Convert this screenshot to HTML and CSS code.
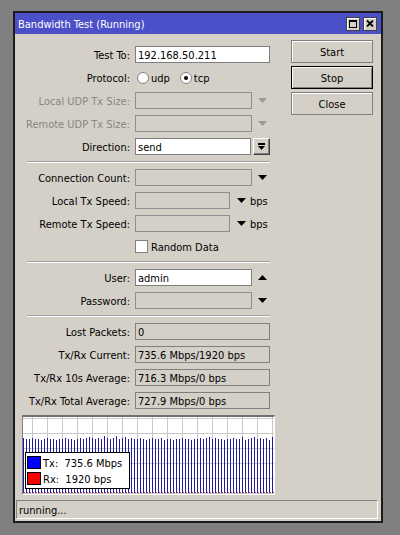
FILE: index.html
```html
<!DOCTYPE html>
<html>
<head>
<meta charset="utf-8">
<title>Bandwidth Test</title>
<link rel="stylesheet" href="styles.css">
</head>
<body>
<div class="window">
  <div class="titlebar">
    <span class="title">Bandwidth Test (Running)</span>
    <div class="tbtns">
      <span class="tbtn"><span class="max-icon"></span></span>
      <span class="tbtn"><svg class="x-icon" width="8" height="7" viewBox="0 0 8 7"><path d="M1 0.5L7 6.5M7 0.5L1 6.5" stroke="#000" stroke-width="1.8"/></svg></span>
    </div>
  </div>
  <div class="body">
    <div class="main">
      <div class="left">
        <div class="form">
          <div class="lbl">Test To:</div>
          <div class="field"><div class="input w-full">192.168.50.211</div></div>

          <div class="lbl">Protocol:</div>
          <div class="field">
            <span class="radio-opt"><svg class="radio" width="12" height="12" viewBox="0 0 12 12"><circle cx="6" cy="6" r="5.5" fill="#fff" stroke="#808080"/></svg><span class="opt-text">udp</span></span>
            <span class="radio-opt"><svg class="radio" width="12" height="12" viewBox="0 0 12 12"><circle cx="6" cy="6" r="5.5" fill="#fff" stroke="#808080"/><circle cx="6" cy="6" r="2" fill="#000"/></svg><span class="opt-text">tcp</span></span>
          </div>

          <div class="lbl dis">Local UDP Tx Size:</div>
          <div class="field"><div class="input disabled w-mid"></div><svg class="arrow" width="9" height="5" viewBox="0 0 9 5"><path d="M0 0H9L4.5 5Z" fill="#9a9a9a"/></svg></div>

          <div class="lbl dis">Remote UDP Tx Size:</div>
          <div class="field"><div class="input disabled w-mid"></div><svg class="arrow" width="9" height="5" viewBox="0 0 9 5"><path d="M0 0H9L4.5 5Z" fill="#9a9a9a"/></svg></div>

          <div class="lbl">Direction:</div>
          <div class="field"><div class="input w-dir">send</div><span class="dd-btn"><svg width="9" height="8" viewBox="0 0 9 8"><rect x="1" y="0" width="7" height="2" fill="#000"/><path d="M1 3H8L4.5 7Z" fill="#000"/></svg></span></div>

          <div class="sep"></div>

          <div class="lbl">Connection Count:</div>
          <div class="field"><div class="input disabled w-mid"></div><svg class="arrow" width="9" height="5" viewBox="0 0 9 5"><path d="M0 0H9L4.5 5Z" fill="#000"/></svg></div>

          <div class="lbl">Local Tx Speed:</div>
          <div class="field"><div class="input disabled w-speed"></div><svg class="arrow arrow-speed" width="9" height="5" viewBox="0 0 9 5"><path d="M0 0H9L4.5 5Z" fill="#000"/></svg><span class="unit">bps</span></div>

          <div class="lbl">Remote Tx Speed:</div>
          <div class="field"><div class="input disabled w-speed"></div><svg class="arrow arrow-speed" width="9" height="5" viewBox="0 0 9 5"><path d="M0 0H9L4.5 5Z" fill="#000"/></svg><span class="unit">bps</span></div>

          <div class="lbl"></div>
          <div class="field"><span class="checkbox"></span><span class="cb-label">Random Data</span></div>

          <div class="sep"></div>

          <div class="lbl">User:</div>
          <div class="field"><div class="input w-mid">admin</div><svg class="arrow" width="9" height="5" viewBox="0 0 9 5"><path d="M0 5H9L4.5 0Z" fill="#000"/></svg></div>

          <div class="lbl">Password:</div>
          <div class="field"><div class="input disabled w-mid"></div><svg class="arrow" width="9" height="5" viewBox="0 0 9 5"><path d="M0 0H9L4.5 5Z" fill="#000"/></svg></div>

          <div class="sep"></div>

          <div class="lbl">Lost Packets:</div>
          <div class="field"><div class="input readonly w-full">0</div></div>

          <div class="lbl">Tx/Rx Current:</div>
          <div class="field"><div class="input readonly w-full">735.6 Mbps/1920 bps</div></div>

          <div class="lbl">Tx/Rx 10s Average:</div>
          <div class="field"><div class="input readonly w-full">716.3 Mbps/0 bps</div></div>

          <div class="lbl">Tx/Rx Total Average:</div>
          <div class="field"><div class="input readonly w-full">727.9 Mbps/0 bps</div></div>
        </div>

        <div class="graph">
          <svg class="graph-svg" width="251" height="77" viewBox="0 0 251 77">
            <path d="M9.5 0V77M24.5 0V77M39.5 0V77M54.5 0V77M69.5 0V77M84.5 0V77M99.5 0V77M114.5 0V77M129.5 0V77M144.5 0V77M159.5 0V77M174.5 0V77M189.5 0V77M204.5 0V77M219.5 0V77M234.5 0V77M249.5 0V77M0 1.5H251M0 16.5H251M0 31.5H251M0 46.5H251M0 61.5H251M0 76.5H251" stroke="#c8c8c8" stroke-width="1" fill="none"/>
            <path d="M0.5 21V76M3.5 22V76M6.5 22V76M9.5 21V76M12.5 22V76M15.5 22V76M18.5 23V76M21.5 22V76M24.5 21V76M27.5 22V76M30.5 22V76M33.5 23V76M36.5 22V76M39.5 22V76M42.5 21V76M45.5 22V76M48.5 22V76M51.5 23V76M54.5 22V76M57.5 21V76M60.5 22V76M63.5 21V76M66.5 20V76M69.5 21V76M72.5 22V76M75.5 21V76M78.5 22V76M81.5 19V76M84.5 21V76M87.5 22V76M90.5 21V76M93.5 19V76M96.5 22V76M99.5 21V76M102.5 20V76M105.5 22V76M108.5 21V76M111.5 22V76M114.5 22V76M117.5 21V76M120.5 22V76M123.5 23V76M126.5 22V76M129.5 21V76M132.5 22V76M135.5 22V76M138.5 21V76M141.5 23V76M144.5 22V76M147.5 22V76M150.5 23V76M153.5 22V76M156.5 22V76M159.5 21V76M162.5 22V76M165.5 22V76M168.5 23V76M171.5 22V76M174.5 22V76M177.5 21V76M180.5 22V76M183.5 21V76M186.5 20V76M189.5 22V76M192.5 21V76M195.5 22V76M198.5 22V76M201.5 23V76M204.5 22V76M207.5 22V76M210.5 21V76M213.5 22V76M216.5 22V76M219.5 20V76M222.5 23V76M225.5 22V76M228.5 21V76M231.5 20V76M234.5 22V76M237.5 21V76M240.5 22V76M243.5 21V76M246.5 23V76M249.5 20V76" stroke="#1e1e9c" stroke-width="1" fill="none"/>
            <path d="M0 75.5H251" stroke="#e0305a" stroke-width="1" stroke-dasharray="1 2" stroke-dashoffset="-1"/>
          </svg>
          <div class="legend">
            <div class="leg-row"><span class="swatch tx"></span><span class="leg-text">Tx:  735.6 Mbps</span></div>
            <div class="leg-row"><span class="swatch rx"></span><span class="leg-text">Rx:  1920 bps</span></div>
          </div>
        </div>
      </div>

      <div class="buttons">
        <div class="btn">Start</div>
        <div class="btn btn-default">Stop</div>
        <div class="btn">Close</div>
      </div>
    </div>
    <div class="status">running...</div>
  </div>
</div>
</body>
</html>
```

FILE: styles.css
```css
html, body {
  margin: 0;
  padding: 0;
}
body {
  background: #808080;
  width: 400px;
  height: 535px;
  overflow: hidden;
  font-family: "DejaVu Sans Condensed", "DejaVu Sans", sans-serif;
  font-stretch: condensed;
  font-size: 11px;
  color: #000;
}
.window {
  margin: 11px 0 0 13px;
  width: 370px;
  height: 512px;
  box-sizing: border-box;
  border: 2px solid #1c1c1c;
  background: #d4d0c8;
  display: flex;
  flex-direction: column;
}
.titlebar {
  height: 21px;
  background: #4b50c8;
  display: flex;
  align-items: center;
  justify-content: space-between;
  padding: 0 4px 0 3px;
}
.title {
  color: #fff;
  font-size: 11px;
  white-space: nowrap;
  position: relative;
  top: 1px;
}
.tbtns {
  display: flex;
  gap: 3px;
}
.tbtn {
  width: 14px;
  height: 14px;
  box-sizing: border-box;
  background: #d4d0c8;
  border: 1px solid #404040;
  box-shadow: inset 1px 1px #fff;
  display: flex;
  align-items: center;
  justify-content: center;
}
.max-icon {
  width: 8px;
  height: 8px;
  box-sizing: border-box;
  border: 1px solid #000;
  border-top-width: 2px;
}
.body {
  flex: 1;
  display: flex;
  flex-direction: column;
}
.main {
  display: flex;
  align-items: flex-start;
}
.left {
  width: 260px;
  display: flex;
  flex-direction: column;
}
.form {
  padding-top: 12px;
  display: grid;
  grid-template-columns: 115px 140px;
  grid-auto-rows: auto;
  column-gap: 5px;
  row-gap: 6px;
}
.lbl {
  height: 17px;
  line-height: 19px;
  text-align: right;
  white-space: nowrap;
}
.lbl.dis {
  color: #868686;
}
.field {
  height: 17px;
  display: flex;
  align-items: center;
  white-space: nowrap;
}
.opt-text, .unit, .cb-label {
  position: relative;
  top: 1px;
}
.input {
  height: 17px;
  box-sizing: border-box;
  border: 1px solid #7f7f7f;
  background: #fff;
  padding-left: 2px;
  line-height: 17px;
  overflow: hidden;
}
.input.disabled {
  background: #d4d0c8;
  border-color: #8e8e8e;
}
.input.readonly {
  background: #d4d0c8;
  border-color: #808080;
}
.w-full { width: 135px; }
.w-mid { width: 117px; }
.w-dir { width: 116px; }
.w-speed { width: 95px; }
.arrow {
  margin-left: 6px;
  flex: none;
}
.arrow.arrow-speed {
  margin-left: 7px;
}
.unit {
  margin-left: 4px;
}
.dd-btn {
  margin-left: 2px;
  width: 17px;
  height: 17px;
  box-sizing: border-box;
  background: #d4d0c8;
  border: 1px solid;
  border-color: #fff #404040 #404040 #fff;
  box-shadow: inset -1px -1px #808080;
  display: flex;
  align-items: center;
  justify-content: center;
}
.radio-opt {
  display: flex;
  align-items: center;
  gap: 2px;
}
.radio-opt:first-child {
  margin-left: 2px;
}
.radio-opt + .radio-opt {
  margin-left: 10px;
}
.checkbox {
  width: 13px;
  height: 13px;
  box-sizing: border-box;
  border: 1px solid #808080;
  background: #fff;
  flex: none;
}
.cb-label {
  margin-left: 3px;
}
.sep {
  grid-column: 1 / -1;
  height: 2px;
  box-sizing: border-box;
  margin: 0 5px 0 12px;
  border-top: 1px solid #a0a0a0;
  border-bottom: 1px solid #fff;
}
.graph {
  position: relative;
  margin: 6px 0 0 7px;
  width: 253px;
  height: 80px;
  box-sizing: border-box;
  background: #fff;
  border-top: 2px solid #707070;
  border-left: 1px solid #808080;
  border-right: 1px solid #fff;
  border-bottom: 1px solid #fff;
}
.graph-svg {
  display: block;
}
.legend {
  position: absolute;
  left: 2px;
  top: 35px;
  width: 105px;
  height: 37px;
  box-sizing: border-box;
  border: 1px solid #000;
  background: #fff;
  padding: 3px 0 0 1px;
}
.leg-row {
  height: 16px;
  display: flex;
  align-items: flex-start;
}
.swatch {
  width: 14px;
  height: 13px;
  box-sizing: border-box;
  border: 1px solid #000;
  flex: none;
}
.swatch.tx { background: #0000ff; }
.swatch.rx { background: #ff0000; }
.leg-text {
  margin-left: 2px;
  white-space: pre;
  line-height: 15px;
}
.buttons {
  margin: 6px 0 0 16px;
  width: 82px;
  display: flex;
  flex-direction: column;
  gap: 3px;
}
.btn {
  height: 23px;
  box-sizing: border-box;
  border: 1px solid #808080;
  box-shadow: inset 1px 1px #fff;
  background: #d4d0c8;
  text-align: center;
  line-height: 23px;
}
.btn.btn-default {
  border-color: #000;
  box-shadow: inset 1px 1px #fff, inset -1px -1px #808080;
}
.status {
  margin: auto 3px 2px 1px;
  height: 19px;
  box-sizing: border-box;
  border-top: 1px solid #808080;
  border-left: 1px solid #808080;
  border-right: 1px solid #fff;
  border-bottom: 1px solid #fff;
  padding-left: 2px;
  line-height: 19px;
}
```
